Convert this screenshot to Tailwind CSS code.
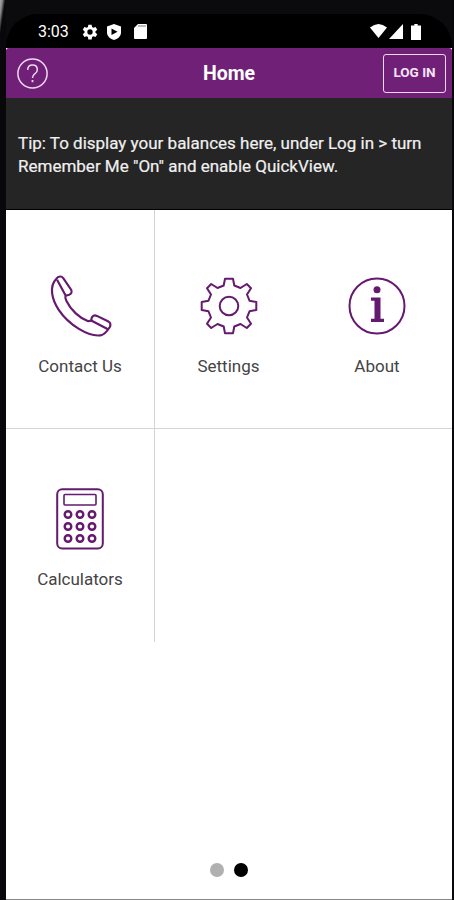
<!DOCTYPE html>
<html lang="en">
<head>
<meta charset="utf-8">
<title>Home</title>
<script src="https://cdn.jsdelivr.net/npm/@tailwindcss/browser@4"></script>
</head>
<body class="bg-[#08080a] overflow-hidden font-['Roboto',sans-serif]">
<div class="relative flex h-[900px] w-[454px] flex-col border-l-[6px] border-r-2 border-[#08080a] bg-white">
  <div class="absolute -left-[6px] top-0 h-10 w-[6px] bg-[linear-gradient(to_bottom_right,#aaa,#888_20%,#08080a_45%)]"></div>
  <header class="flex h-12 shrink-0 flex-col bg-[#0b0b0d] pt-[14px]">
    <div class="flex h-[34px] items-center rounded-t-[32px] bg-black pl-8 pr-[31px] pt-[1px] text-white">
      <span class="w-[44px] whitespace-nowrap text-[16px] leading-none">3:03</span>
      <svg class="h-4 w-4" viewBox="0 0 24 24" fill="#fff"><path fill-rule="evenodd" d="M9.500 1h5l.6 3.400 2 1.200 3.300-1.200 2.500 4.300-2.700 2.200v2.200l2.700 2.200-2.500 4.300-3.300-1.200-2 1.200-.6 3.600h-5l-.6-3.600-2-1.200-3.300 1.200-2.500-4.300 2.700-2.200v-2.200L1.100 8.700l2.500-4.300 3.300 1.200 2-1.200zM12 8a4 4 0 100 8 4 4 0 000-8z"/></svg>
      <svg class="ml-[9px] h-4 w-[14px]" viewBox="0 0 14 16"><path d="M7 0l7 2.500v6c0 4-3.500 6.500-7 7.500-3.500-1-7-3.500-7-7.500v-6z" fill="#fff"/><path d="M4.500 4.500v6.500L10.500 7.800z" fill="#000"/></svg>
      <svg class="ml-[13px] h-[15px] w-[13px]" viewBox="0 0 13 15"><path d="M4 0h8q1 0 1 1v13q0 1-1 1H1q-1 0-1-1V4z" fill="#fff"/><path d="M4 2h8" stroke="#bbb" stroke-width="2"/></svg>
      <svg class="ml-auto h-[15px] w-[17px]" viewBox="0 0 17 15"><path d="M0 3.500Q8.500-3.500 17 3.500L8.500 14z" fill="#fff"/></svg>
      <svg class="ml-[2px] h-[15px] w-[14px]" viewBox="0 0 14 15"><path d="M14 0v15H0z" fill="#fff"/></svg>
      <svg class="ml-[8px] h-4 w-[10px]" viewBox="0 0 9 16" preserveAspectRatio="none"><path d="M3 0h3v1.500h3V16H0V1.500h3z" fill="#fff"/></svg>
    </div>
  </header>
  <nav class="grid h-[50px] shrink-0 grid-cols-[1fr_auto_1fr] items-center rounded-t-[3px] bg-[#702077] pl-[11px] pr-[6px] text-white">
    <svg class="h-[31px] w-[31px]" viewBox="0 0 31 31" fill="none" stroke="#f0daf2" stroke-width="1.500"><circle cx="15.500" cy="15.500" r="14.600"/><path d="M10.700 12q0-5 4.800-5t4.800 4.700q0 2.600-2.500 4.200-2.300 1.500-2.300 4"/><path d="M15.500 22v2.200" stroke-width="1.800"/></svg>
    <h1 class="pr-[5px] pt-[2px] text-[19.500px] font-bold leading-none">Home</h1>
    <button class="h-[39px] w-[63px] justify-self-end rounded-[3px] border border-[#f0daf2] text-[13.500px] font-bold leading-none text-[#f5e5f6]">LOG IN</button>
  </nav>
  <section class="h-28 shrink-0 border-b border-black bg-[#252525] pl-3 pt-[34px] text-[17px] leading-[22.500px] text-[#f0f0f0]">
    <p class="whitespace-nowrap [-webkit-text-stroke:0.2px]">Tip: To display your balances here, under Log in &gt; turn<br>Remember Me "On" and enable QuickView.</p>
  </section>
  <main class="grid shrink-0 grid-cols-[149px_147px_150px] grid-rows-[219px_213px] text-[17px] text-[#444]">
    <a class="flex flex-col items-center border-b border-r border-[#d4d4d4] pt-[63px]">
      <svg class="h-[67px] w-[67px]" viewBox="80 40 200 200" fill="none" stroke="#65196f" stroke-width="6.500" stroke-linejoin="round"><path d="M108 57C114 49 123 48 129 56L152 90C156 97 152 103 146 105L136 108C133 112 135 117 139 125C151 150 177 175 203 184L212 182L213 175C215 167 222 165 229 168L262 184C270 188 271 195 267 202C260 213 252 225 240 226C204 231 145 195 115 150C95 120 85 80 108 57Z"/><path d="M110 60L136 108M212 182L262 208"/></svg>
      <span class="mt-[14px] leading-6">Contact Us</span>
    </a>
    <a class="flex flex-col items-center border-b border-[#d4d4d4] pt-[66px]">
      <svg class="h-[60px] w-[60px]" viewBox="-30 -30 60 60" fill="none" stroke="#65196f" stroke-width="2" stroke-linejoin="round"><path d="M-4-27.300H4L5.300-20.500L11.500-18L17.800-22L22-17.800L18-11.500L20.500-5.300L27.300-4V4L20.500 5.300L18 11.500L22 17.800L17.800 22L11.500 18L5.300 20.500L4 27.300H-4L-5.300 20.500L-11.500 18L-17.800 22L-22 17.800L-18 11.500L-20.500 5.300L-27.300 4V-4L-20.500-5.300L-18-11.500L-22-17.800L-17.800-22L-11.500-18L-5.300-20.500Z"/><circle r="9.300"/></svg>
      <span class="mt-[18px] leading-6">Settings</span>
    </a>
    <a class="flex flex-col items-center border-b border-[#d4d4d4] pt-[66px]">
      <svg class="h-[60px] w-[60px]" viewBox="-30 -30 60 60" fill="#65196f"><circle r="27.500" fill="none" stroke="#65196f" stroke-width="2"/><circle cy="-16.300" r="3.500"/><path d="M-6-8.500H3.500V12.800H7V16H-6V12.800H-2.500V-5.300H-6z"/></svg>
      <span class="mt-[18px] leading-6">About</span>
    </a>
    <a class="flex flex-col items-center border-r border-[#d4d4d4] pt-[59px]">
      <svg class="h-[62px] w-[48px]" viewBox="0 0 48 62" fill="none" stroke="#65196f" stroke-width="2"><rect x="1.200" y="1.200" width="45.600" height="59.400" rx="5"/><rect x="8" y="6.500" width="32" height="10.500" rx="1" stroke-width="1.600"/><g stroke-width="2.400"><circle cx="12" cy="26.500" r="3.300"/><circle cx="24" cy="26.500" r="3.300"/><circle cx="36" cy="26.500" r="3.300"/><circle cx="12" cy="38.500" r="3.300"/><circle cx="24" cy="38.500" r="3.300"/><circle cx="36" cy="38.500" r="3.300"/><circle cx="12" cy="50.500" r="3.300"/><circle cx="24" cy="50.500" r="3.300"/><circle cx="36" cy="50.500" r="3.300"/></g></svg>
      <span class="mt-[17px] leading-6">Calculators</span>
    </a>
  </main>
  <footer class="flex flex-1 items-end justify-center gap-[10px] border-b border-[#888] pb-[22px]">
    <span class="h-[14px] w-[14px] rounded-full bg-[#b0b0b0]"></span>
    <span class="h-[14px] w-[14px] rounded-full bg-black"></span>
  </footer>
</div>
</body>
</html>
